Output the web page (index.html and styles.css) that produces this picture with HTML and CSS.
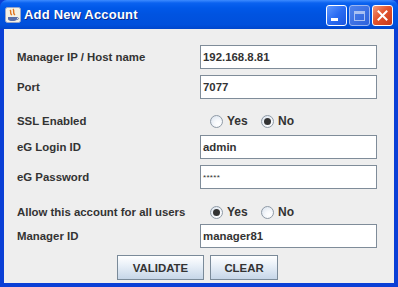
FILE: index.html
```html
<!DOCTYPE html>
<html lang="en">
<head>
    <meta charset="UTF-8">
    <title>Add New Account</title>
    <link rel="stylesheet" href="styles.css">
</head>
<body>

    <div class="window">
        <div class="titlebar">
            <svg class="app-icon" width="16" height="16" viewBox="0 0 16 16">
                <rect x="0.5" y="0.5" width="15" height="15" rx="2" fill="#f4f1e4" stroke="#9aa6c8"/>
                <path d="M5 3 C7 5 4 6 7 8" stroke="#e0741c" stroke-width="1.4" fill="none"/>
                <path d="M8 2 C10 4 7 6 10 8" stroke="#e0741c" stroke-width="1.4" fill="none"/>
                <path d="M3 10 h9 v2 c0 1.5 -2 2 -4.5 2 s-4.5 -0.5 -4.5 -2 z" fill="#5a6fa8"/>
                <path d="M12 10.5 c2 0 2 2 0 2" stroke="#5a6fa8" fill="none"/>
            </svg>
            <span class="title">Add New Account</span>
            <div class="controls">
                <span class="ctl"><span class="min-glyph"></span></span>
                <span class="ctl disabled"><span class="max-glyph"></span></span>
                <span class="ctl close">
                    <svg width="13" height="13" viewBox="0 0 13 13">
                        <path d="M2.5 2.5 L10.5 10.5 M10.5 2.5 L2.5 10.5" stroke="#fff" stroke-width="2" stroke-linecap="square"/>
                    </svg>
                </span>
            </div>
        </div>

        <div class="content">
            <div class="row">
                <label>Manager IP / Host name</label>
                <div class="field">192.168.8.81</div>
            </div>
            <div class="row gap-6">
                <label>Port</label>
                <div class="field">7077</div>
            </div>
            <div class="row gap-10">
                <label>SSL Enabled</label>
                <div class="radios">
                    <span class="radio"><i class="dot"></i>Yes</span>
                    <span class="radio"><i class="dot on"></i>No</span>
                </div>
            </div>
            <div class="row gap-2">
                <label>eG Login ID</label>
                <div class="field">admin</div>
            </div>
            <div class="row gap-6">
                <label>eG Password</label>
                <div class="field password">*****</div>
            </div>
            <div class="row gap-11">
                <label>Allow this account for all users</label>
                <div class="radios">
                    <span class="radio"><i class="dot on"></i>Yes</span>
                    <span class="radio"><i class="dot"></i>No</span>
                </div>
            </div>
            <div class="row">
                <label>Manager ID</label>
                <div class="field">manager81</div>
            </div>
            <div class="buttons">
                <button class="validate">VALIDATE</button>
                <button class="clear">CLEAR</button>
            </div>
        </div>
    </div>

</body>
</html>
```

FILE: styles.css
```css
* {
    margin: 0;
    padding: 0;
    box-sizing: border-box;
}
body {
    background: #eeeeee;
    font-family: 'Liberation Sans', Arial, sans-serif;
}
.window {
    width: 398px;
    height: 287px;
    display: flex;
    flex-direction: column;
    background: #0a3fd6;
}
.titlebar {
    height: 29px;
    display: flex;
    align-items: center;
    padding: 0 5px 0 5px;
    background: linear-gradient(#3d8bff 0, #0a62f0 3px, #0058e8 8px, #0053e0 50%, #0050dc 85%, #0046cc 100%);
    border-radius: 7px 7px 0 0;
}
.app-icon {
    flex: none;
    margin-right: 3px;
    margin-top: 1px;
}
.title {
    color: #fff;
    font-family: 'Liberation Sans', Arial, sans-serif;
    font-weight: bold;
    font-size: 13px;
    letter-spacing: 0.2px;
    text-shadow: 1px 1px 0 #0a2a8c;
    flex: 1;
}
.controls {
    display: flex;
    gap: 2px;
    margin-top: 2px;
}
.ctl {
    width: 21px;
    height: 21px;
    border: 1px solid #fff;
    border-radius: 3px;
    background: linear-gradient(135deg, #5f98ff 0%, #2a6cf2 50%, #1b56e0 100%);
    display: flex;
    align-items: center;
    justify-content: center;
}
.ctl.disabled {
    border-color: #9cb6f0;
    background: linear-gradient(135deg, #4f82ec 0%, #2d62dc 100%);
}
.ctl.close {
    background: linear-gradient(135deg, #f19a7c 0%, #e2532d 45%, #c7381a 100%);
}
.min-glyph {
    width: 7px;
    height: 3px;
    background: #fff;
    margin: 8px 5px 0 0;
}
.max-glyph {
    width: 11px;
    height: 10px;
    border: 1px solid #a9c0f2;
    border-top-width: 3px;
}
.content {
    flex: 1;
    margin: 0 4px 4px 4px;
    background: #eeeeee;
    padding: 16px 0 0 13px;
    font-size: 11.4px;
    font-weight: bold;
    color: #333333;
}
.row {
    height: 24px;
    display: flex;
    align-items: center;
}
.gap-2 { margin-top: 2px; }
.gap-6 { margin-top: 6px; }
.gap-10 { margin-top: 10px; }
.gap-11 { margin-top: 11px; }
.row label {
    width: 183px;
    flex: none;
}
.field {
    width: 177px;
    height: 24px;
    background: #fff;
    border: 1px solid #7f8c99;
    padding: 0 2px;
    display: flex;
    align-items: center;
}
.field.password {
    font-size: 8px;
    font-weight: normal;
    letter-spacing: 0.3px;
}
.radios {
    display: flex;
    align-items: center;
    padding-left: 10px;
}
.radio {
    display: flex;
    align-items: center;
    width: 51px;
    font-size: 12px;
}
.dot {
    width: 13px;
    height: 13px;
    border-radius: 50%;
    border: 1px solid #8f9aa6;
    background: radial-gradient(circle at 65% 70%, #ffffff 0, #f6f8fb 35%, #d6e0ec 100%);
    margin-right: 4px;
    display: flex;
    align-items: center;
    justify-content: center;
}
.dot.on::after {
    content: "";
    width: 7px;
    height: 7px;
    border-radius: 50%;
    background: #333333;
}
.buttons {
    display: flex;
    justify-content: center;
    gap: 6px;
    margin: 7px 0 0 -16px;
}
button {
    height: 25px;
    font-family: 'Liberation Sans', Arial, sans-serif;
    font-weight: bold;
    font-size: 11.4px;
    color: #333333;
    border: 1px solid #7a8a99;
    background: linear-gradient(#ffffff 0%, #e9f0f8 40%, #c6d6e8 100%);
}
.validate {
    width: 87px;
}
.clear {
    width: 68px;
}
```
